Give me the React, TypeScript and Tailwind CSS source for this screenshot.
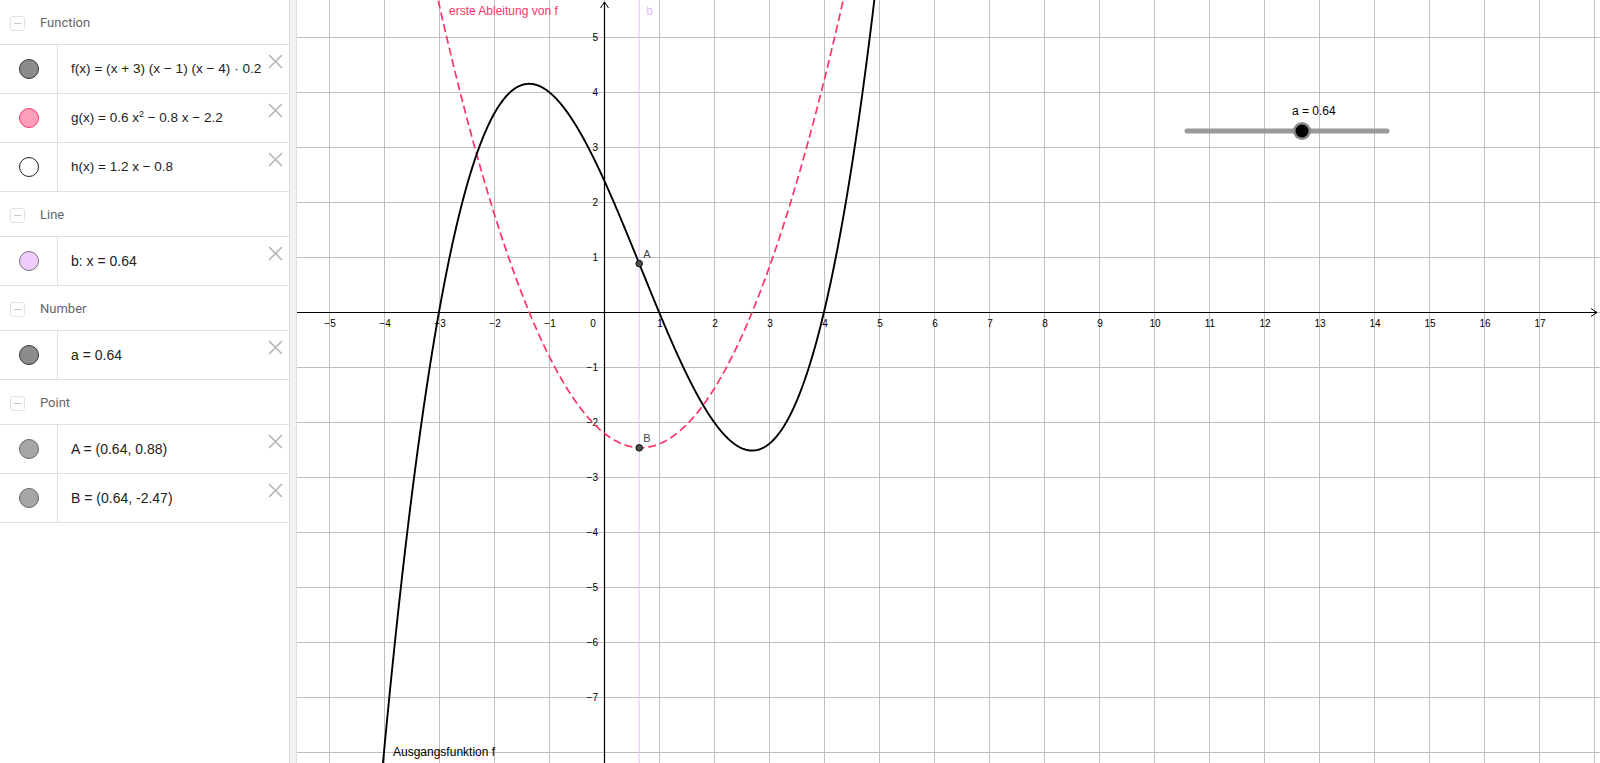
import React from "react";

// graphics view geometry (px inside the svg)
const W = 1303;
const H = 763;
const OX = 307;
const OY = 312;
const U = 55;

const f = (x: number) => 0.2 * (x + 3) * (x - 1) * (x - 4);
const g = (x: number) => 0.6 * x * x - 0.8 * x - 2.2;

const sx = (x: number) => OX + x * U;
const sy = (y: number) => OY - y * U;

function curvePath(fn: (x: number) => number, from: number, to: number) {
    const pts: string[] = [];
    for (let x = from; x <= to; x += 0.01) {
        const y = sy(fn(x));
        if (y < -200 || y > H + 200) continue;
        pts.push(`${pts.length ? "L" : "M"}${sx(x).toFixed(2)} ${y.toFixed(2)}`);
    }
    return pts.join(" ");
}

const A = { x: 0.64, y: 0.88 };
const B = { x: 0.64, y: -2.47 };

function GraphicsView() {
    const xs = [];
    for (let k = -5; k <= 18; k++) xs.push(k);
    const ys = [];
    for (let k = -8; k <= 5; k++) ys.push(k);
    const font = "'Liberation Sans', Arial, sans-serif";

    return (
        <svg width={W} height={H} className="block" style={{ fontFamily: font }}>
            {/* grid */}
            {xs.map((k) => (
                <line key={"gx" + k} x1={sx(k) + 0.5} x2={sx(k) + 0.5} y1={0} y2={H} stroke="#c0c0c0" strokeWidth={1} />
            ))}
            {ys.map((k) => (
                <line key={"gy" + k} x1={0} x2={W} y1={sy(k) + 0.5} y2={sy(k) + 0.5} stroke="#c0c0c0" strokeWidth={1} />
            ))}

            {/* line b */}
            <line x1={sx(0.64)} x2={sx(0.64)} y1={0} y2={H} stroke="#e3c6ff" strokeWidth={1} />
            <text x={sx(0.64) + 7} y={15} fontSize={12} fill="#e0c0ff">b</text>

            {/* axes */}
            <line x1={0} x2={W - 3} y1={OY + 0.5} y2={OY + 0.5} stroke="#000" strokeWidth={1.2} />
            <polyline points={`${W - 9},${OY - 3.5} ${W - 3},${OY + 0.5} ${W - 9},${OY + 4.5}`} fill="none" stroke="#000" strokeWidth={1} />
            <line x1={OX + 0.5} x2={OX + 0.5} y1={2} y2={H} stroke="#000" strokeWidth={1.2} />
            <polyline points={`${OX - 3.5},${8} ${OX + 0.5},${2} ${OX + 4.5},${8}`} fill="none" stroke="#000" strokeWidth={1} />

            {/* axis labels */}
            {xs.filter((k) => k !== 0 && k <= 17).map((k) => (
                <text key={"lx" + k} x={sx(k) + 1} y={OY + 15} fontSize={10} textAnchor="middle" fill="#000">
                    {k < 0 ? "\u2212" + -k : k}
                </text>
            ))}
            <text x={OX - 11} y={OY + 15} fontSize={10} textAnchor="middle" fill="#000">0</text>
            {ys.filter((k) => k !== 0 && k > -8).map((k) => (
                <text key={"ly" + k} x={OX - 6} y={sy(k) + 4} fontSize={10} textAnchor="end" fill="#000">
                    {k < 0 ? "\u2212" + -k : k}
                </text>
            ))}

            {/* g: derivative, dashed */}
            <path d={curvePath(g, -5.6, 8)} fill="none" stroke="#ff3366" strokeWidth={1.7} strokeDasharray="8 4" />
            {/* f */}
            <path d={curvePath(f, -5.6, 8)} fill="none" stroke="#000" strokeWidth={1.9} />

            <text x={152} y={15} fontSize={12} fill="#ff3366">erste Ableitung von f</text>
            <text x={96} y={756} fontSize={12} fill="#000">Ausgangsfunktion f</text>

            {/* points */}
            <circle cx={sx(A.x)} cy={sy(A.y)} r={3.3} fill="#4d4d4d" stroke="#111" strokeWidth={1} />
            <text x={sx(A.x) + 4} y={sy(A.y) - 6} fontSize={11} fill="#444">A</text>
            <circle cx={sx(B.x)} cy={sy(B.y)} r={3.3} fill="#4d4d4d" stroke="#111" strokeWidth={1} />
            <text x={sx(B.x) + 4} y={sy(B.y) - 6} fontSize={11} fill="#444">B</text>

            {/* slider a */}
            <text x={995} y={115} fontSize={12} fill="#000">a = 0.64</text>
            <line x1={890} x2={1090} y1={131} y2={131} stroke="#999" strokeWidth={5} strokeLinecap="round" />
            <circle cx={1005} cy={131} r={9} fill="#8a8a8a" />
            <circle cx={1005} cy={131} r={6.5} fill="#000" />
        </svg>
    );
}

function CloseIcon() {
    return (
        <svg width="15" height="15" viewBox="0 0 15 15" className="mt-[9px] mr-[6px] shrink-0">
            <path d="M1 1L14 14M14 1L1 14" stroke="#b3b3b3" strokeWidth="1.5" />
        </svg>
    );
}

function Header({ label }: { label: string }) {
    return (
        <div className="h-[45px] flex items-center border-b border-[#e0e0e0]">
            <div className="ml-[10px] mt-[3px] w-[15px] h-[15px] rounded-[3px] border border-[#e3e3e3] flex items-center justify-center">
                <div className="w-[7px] h-px bg-[#c4c4c4]" />
            </div>
            <span className="ml-[15px] pt-[2px] text-[13px] text-[#666]" style={{ fontFamily: "Roboto, 'Noto Sans', sans-serif" }}>
                {label}
            </span>
        </div>
    );
}

function Row({ dot, children }: { dot: string; children: React.ReactNode }) {
    return (
        <div className="h-[49px] flex border-b border-[#e0e0e0]">
            <div className="w-[58px] border-r border-[#e0e0e0] flex items-center justify-center">
                <div className={"w-[20px] h-[20px] rounded-full border " + dot} />
            </div>
            <div className="flex-1 pl-[13px] flex items-center text-[#222] whitespace-nowrap" style={{ fontFamily: "'Liberation Sans', Arial, sans-serif" }}>
                {children}
            </div>
            <CloseIcon />
        </div>
    );
}

export default function App() {
    return (
        <div className="w-[1600px] h-[763px] flex overflow-hidden bg-white">
            <div className="w-[290px] shrink-0 border-r border-[#dcdcdc] bg-white">
                <Header label="Function" />
                <Row dot="bg-[#8c8c8c] border-[#333]">
                    <span className="text-[13.6px]">f(x) = (x + 3) (x − 1) (x − 4) · 0.2</span>
                </Row>
                <Row dot="bg-[#ff9ebb] border-[#ff3366]">
                    <span className="text-[13.5px]">
                        g(x) = 0.6 x<sup className="text-[9px]">2</sup> − 0.8 x − 2.2
                    </span>
                </Row>
                <Row dot="bg-white border-[#222]">
                    <span className="text-[13.5px]">h(x) = 1.2 x − 0.8</span>
                </Row>
                <Header label="Line" />
                <Row dot="bg-[#f0ccff] border-[#777]">
                    <span className="text-[14px]">b: x = 0.64</span>
                </Row>
                <Header label="Number" />
                <Row dot="bg-[#8c8c8c] border-[#333]">
                    <span className="text-[14px]">a = 0.64</span>
                </Row>
                <Header label="Point" />
                <Row dot="bg-[#a6a6a6] border-[#666]">
                    <span className="text-[14px]">A = (0.64, 0.88)</span>
                </Row>
                <Row dot="bg-[#a6a6a6] border-[#666]">
                    <span className="text-[14px]">B = (0.64, -2.47)</span>
                </Row>
            </div>
            <div className="w-[7px] shrink-0 bg-[#f2f2f2] border-r border-[#dcdcdc]" />
            <div className="flex-1 overflow-hidden">
                <GraphicsView />
            </div>
        </div>
    );
}
